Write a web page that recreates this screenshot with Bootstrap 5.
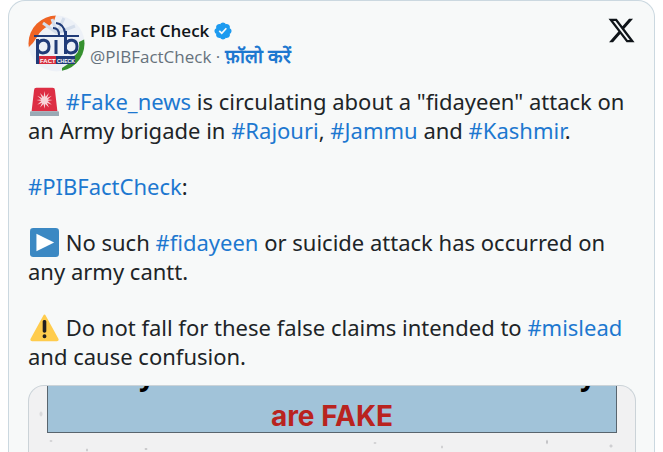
<!DOCTYPE html>
<html lang="en">
<head>
<meta charset="utf-8">
<meta name="viewport" content="width=device-width, initial-scale=1">
<title>PIB Fact Check post</title>
<link href="https://cdn.jsdelivr.net/npm/bootstrap@5.3.0/dist/css/bootstrap.min.css" rel="stylesheet">
<style>
body { font-family: "Noto Sans", "Open Sans", sans-serif; color: #202427; background: #fff; }
a { color: #1d78d0; text-decoration: none; }
.post { background: #f7f9f9; border: 1px solid #cbd8e0; border-bottom: 0; border-radius: 17px 17px 0 0; padding: 14px 18px 0 19px; }
.avatar { width: 57px; height: 57px; }
.handle-block { margin-left: 5px; padding-top: 3px; line-height: 26px; }
.author { font-family: "Open Sans", sans-serif; font-size: 17px; font-weight: 600; color: #0f1419; }
.handle { font-family: "Open Sans", sans-serif; font-size: 17px; color: #66727c; }
.follow { font-size: 19px; line-height: 1; font-weight: 700; color: #1d78d0; }
.x-link { margin-top: 1px; }
.post-text { font-size: 22px; line-height: 29px; margin-top: 15px; }
.post-text p { margin-bottom: 27px; }
.post-text p:last-child { margin-bottom: 14px; }
.emoji { width: 29px; height: 29px; margin: 0 1px 0 2px; vertical-align: -6px; }
.media { border: 1px solid #cbd3d8; border-bottom: 0; border-radius: 16px 16px 0 0; padding: 0 18px; background:
  radial-gradient(ellipse 2px 1px at 22px 55px, #d2d2d4 50%, transparent),
  radial-gradient(ellipse 1px 2px at 58px 64px, #c9c9cb 50%, transparent),
  radial-gradient(ellipse 2px 1px at 117px 63px, #c6c6c8 50%, transparent),
  radial-gradient(ellipse 2px 3px at 12px 28px, #dadadc 50%, transparent),
  radial-gradient(ellipse 1px 3px at 518px 56px, #c2c2c5 50%, transparent),
  radial-gradient(ellipse 2px 1px at 346px 57px, #d0d0d2 50%, transparent),
  radial-gradient(ellipse 1px 2px at 413px 61px, #cdcdcf 50%, transparent),
  radial-gradient(ellipse 2px 2px at 582px 60px, #cfcfd2 50%, transparent),
  #f1f1f2; }
.banner { background: #a1c3d9; border: 1px solid #59656e; border-top: 0; height: 47px; font-weight: 700; }
.headline { height: 14px; font-size: 28px; line-height: 0; padding: 0 20px 0 91px; color: #000; }
.headline span { margin-top: -12px; }
.verdict { font-family: Inter, sans-serif; font-size: 28px; line-height: 32px; color: #b9231f; }
</style>
</head>
<body class="min-vh-100 d-flex flex-column">
<article class="post mx-2 flex-grow-1 d-flex flex-column">
  <header class="d-flex align-items-start">
    <svg class="avatar flex-shrink-0" viewBox="0 0 57 57" role="img" aria-label="PIB Fact Check logo">
      <defs><clipPath id="disc"><circle cx="28.5" cy="28.5" r="28"/></clipPath></defs>
      <g clip-path="url(#disc)">
        <rect width="57" height="57" fill="#edf1f7"/>
        <path d="M0 33Q5 29 9 22Q13 14 21 11L26 6L28 0H0Z" fill="#ef6424"/>
        <path d="M57 24L51 27Q53 38 43 43L40 49L34 53V57H57Z" fill="#36912f"/>
        <path d="M29 18L15 8M29 18L24 4M29 18L36 3M29 18L47 11" stroke="#d5deeb" stroke-width="3"/>
      </g>
      <g fill="none" stroke="#203b78">
        <path d="M6 21H51" stroke-width="2"/>
        <path d="M9.500 24V49M9.500 30C12 23 21 24 21 31.500S12 40 9.500 34M28 25V39M37.500 16V39M37.500 30C40 23 49 24 49 31.500S40 40 37.500 34" stroke-width="3"/>
        <path d="M25 13Q31 13 31 20M28 8Q36 9 37 18" stroke-width="2"/>
      </g>
      <path d="M11 41H28V49H11Z" fill="#d52c3d"/><path d="M28 41H47V49H28Z" fill="#203b78"/>
      <text x="12" y="47.500" font-family="Liberation Sans, sans-serif" font-size="6" font-weight="700" fill="#fff">FACT</text>
      <text x="29" y="47.500" font-family="Liberation Sans, sans-serif" font-size="5" font-weight="700" fill="#fff">CHECK</text>
    </svg>
    <div class="handle-block">
      <div class="d-flex align-items-center gap-1">
        <span class="author">PIB Fact Check</span>
        <svg width="20" height="20" viewBox="0 0 22 22" role="img" aria-label="Verified"><path fill="#1d9bf0" d="M20.396 11c-.018-.646-.215-1.275-.57-1.816-.354-.54-.852-.972-1.438-1.246.223-.607.27-1.264.14-1.897-.131-.634-.437-1.218-.882-1.687-.47-.445-1.053-.75-1.687-.882-.633-.13-1.29-.083-1.897.14-.273-.587-.704-1.086-1.245-1.44S11.647 1.620 11 1.604c-.646.017-1.273.213-1.813.568s-.969.854-1.240 1.440c-.608-.223-1.267-.272-1.902-.14-.635.130-1.220.436-1.690.882-.445.470-.749 1.055-.878 1.688-.130.633-.080 1.290.144 1.896-.587.274-1.087.705-1.443 1.245-.356.540-.555 1.170-.574 1.817.020.647.218 1.276.574 1.817.356.540.856.972 1.443 1.245-.224.606-.274 1.263-.144 1.896.130.634.433 1.218.877 1.688.470.443 1.054.747 1.687.878.633.132 1.290.084 1.897-.136.274.586.705 1.084 1.246 1.439.540.354 1.170.551 1.816.569.647-.016 1.276-.213 1.817-.567s.972-.854 1.245-1.440c.604.239 1.266.296 1.903.164.636-.132 1.220-.447 1.680-.907.460-.460.776-1.044.908-1.681s.075-1.299-.165-1.903c.586-.274 1.084-.705 1.439-1.246.354-.540.551-1.170.569-1.816zM9.662 14.850l-3.429-3.428 1.293-1.302 2.072 2.072 4.400-4.794 1.347 1.246z"/></svg>
      </div>
      <div class="handle">@PIBFactCheck · <a class="follow" href="#" lang="hi">फ़ॉलो करें</a></div>
    </div>
    <a class="x-link ms-auto" href="#" aria-label="View on X"><svg class="d-block" width="29" height="29" viewBox="0 0 24 24"><path fill="#0f1419" d="M18.244 2.250h3.308l-7.227 8.260 8.502 11.240H16.170l-5.214-6.817L4.990 21.750H1.680l7.730-8.835L1.254 2.250H8.080l4.713 6.231zm-1.161 17.520h1.833L7.084 4.126H5.117z"/></svg></a>
  </header>
  <div class="post-text">
    <p><svg class="emoji" viewBox="0 0 36 36" role="img" aria-label="Siren"><path fill="#dd2e44" d="M5 4Q5 1 8 1H28Q31 1 31 4L34 30H2Z"/><path fill="#99aab5" d="M1 30H35Q36 30 36 31V36H0V31Q0 30 1 30Z"/><path fill="#f8d5d9" d="M18 5l1.200 7 4.300-4.500-2.500 6 6-2.500-5 4.500 6 .500-6 1.500 5 4.500-6-2.500 2.500 6-4.500-4.500L18 27l-1.200-6-4.300 4.500 2.500-6-6 2.500 5-4.500-6-1.500 6-.500-5-4.500 6 2.500-2.500-6 4.500 4.500z"/></svg> <a href="#">#Fake_news</a> is circulating about a "fidayeen" attack on an Army brigade in <a href="#">#Rajouri</a>, <a href="#">#Jammu</a> and <a href="#">#Kashmir</a>.</p>
    <p><a href="#">#PIBFactCheck</a>:</p>
    <p><svg class="emoji" viewBox="0 0 36 36" role="img" aria-label="Play"><rect width="36" height="36" rx="4" fill="#3b88c3"/><path d="M8 7V29L30 18Z" fill="#fff"/></svg> No such <a href="#">#fidayeen</a> or suicide attack has occurred on any army cantt.</p>
    <p><svg class="emoji" viewBox="0 0 36 36" role="img" aria-label="Warning"><path fill="#ffcc4d" d="M2.650 35C.810 35-.050 33.660.740 32.020L16.560 2.980C17.350 1.350 18.650 1.350 19.440 2.980L35.260 32.020C36.050 33.660 35.190 35 33.350 35Z"/><path fill="#231f20" d="M15.580 28.950a2.420 2.420 0 0 1 4.840 0 2.420 2.420 0 0 1-4.840 0zm.180-18.300c0-1.300.960-2.100 2.240-2.100s2.240.830 2.240 2.100v11.800c0 1.270-.960 2.100-2.240 2.100s-2.240-.800-2.240-2.100z"/></svg> Do not fall for these false claims intended to <a href="#">#mislead</a> and cause confusion.</p>
  </div>
  <div class="media flex-grow-1 overflow-hidden">
    <div class="banner overflow-hidden text-center">
      <div class="headline d-flex justify-content-between"><span>y</span><span>y</span></div>
      <div class="verdict">are FAKE</div>
    </div>
  </div>
</article>
<script src="https://cdn.jsdelivr.net/npm/bootstrap@5.3.0/dist/js/bootstrap.bundle.min.js"></script>
</body>
</html>
